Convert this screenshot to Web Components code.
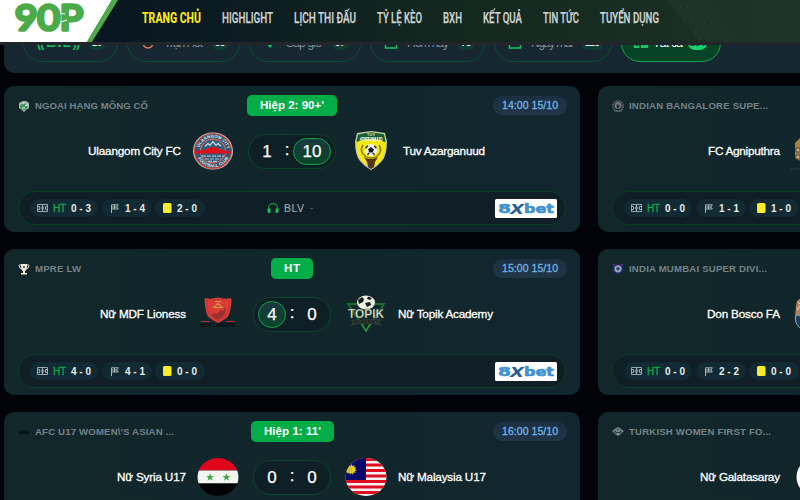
<!DOCTYPE html>
<html lang="vi">
<head>
<meta charset="utf-8">
<title>90P</title>
<style>
html,body{margin:0;height:500px;overflow:hidden;background:#020308;font-family:"Liberation Sans",Arial,sans-serif}
</style>
</head>
<body>
<live-page></live-page>
<script>
const matches = [
  { icon: 'mongol', league: 'NGOẠI HẠNG MÔNG CỔ', lw: 113, status: "Hiệp 2: 90+'", sw: 64, time: '14:00 15/10', home: 'Ulaangom City FC', hw: 93, hc: 'ulaan', score: '1,10,a', ac: 'tuv', away: 'Tuv Azarganuud', aw: 82, stats: ['0 - 3', '1 - 4', '2 - 0'], blv: 1 },
  { icon: 'india', league: 'INDIAN BANGALORE SUPE...', lw: 139, status: "Hiệp 2: 80'", sw: 58, time: '15:00 15/10', home: 'FC Agniputhra', hw: 72, hc: 'agni', score: '0,0', ac: 'gala', away: 'Kodagu FC', aw: 58, stats: ['0 - 0', '1 - 1', '1 - 0'] },
  { icon: 'trophy', league: 'MPRE LW', lw: 46, status: 'HT', sw: 16, time: '15:00 15/10', home: 'Nữ MDF Lioness', hw: 86, hc: 'mdf', score: '4,0,h', ac: 'topik', away: 'Nữ Topik Academy', aw: 95, stats: ['4 - 0', '4 - 1', '0 - 0'] },
  { icon: 'mumbai', league: 'INDIA MUMBAI SUPER DIVI...', lw: 138, status: 'HT', sw: 16, time: '15:30 15/10', home: 'Don Bosco FA', hw: 73, hc: 'bosco', score: '0,0', ac: 'gala', away: 'Mumbai FC', aw: 60, stats: ['0 - 0', '2 - 2', '0 - 0'] },
  { icon: 'afc', league: "AFC U17 WOMEN\\'S ASIAN ...", lw: 139, status: "Hiệp 1: 11'", sw: 57, time: '16:00 15/10', home: 'Nữ Syria U17', hw: 69, hc: 'syria', score: '0,0', ac: 'malaysia', away: 'Nữ Malaysia U17', aw: 88, stats: ['0 - 0', '0 - 0', '0 - 0'] },
  { icon: 'turk', league: 'TURKISH WOMEN FIRST FO...', lw: 142, status: "Hiệp 1: 11'", sw: 57, time: '16:00 15/10', home: 'Nữ Galatasaray', hw: 80, hc: 'gala', score: '0,0', ac: 'gala', away: 'Nữ Trabzonspor', aw: 82, stats: ['0 - 0', '0 - 0', '0 - 0'] }
];

// One line of text set to an exact advance width.
const line = (t, w, size, o = {}) => {
  const h = o.h || Math.round(size * 1.5), fill = o.fill || '#fff';
  return `<svg class="line" width="${w}" height="${h}" style="display:block;flex:none;overflow:visible"><text x="0" y="${o.y || Math.round(h / 2 + size * .36)}" textLength="${w}" lengthAdjust="${o.squeeze ? 'spacingAndGlyphs' : 'spacing'}" font-size="${size}" font-weight="${o.weight || 400}" fill="${fill}" ${o.ink ? `stroke="${fill}" stroke-width="${o.ink}"` : ''} ${o.font ? `font-family="${o.font}"` : ''}>${t}</text></svg>`;
};
const define = (name, css, render) => customElements.define(name, class extends HTMLElement {
  connectedCallback() {
    if (this.shadowRoot) return;
    this.attachShadow({ mode: 'open' }).innerHTML = `<style>*{box-sizing:border-box}${css}</style>${render(this)}`;
  }
});

const ball = (x, y, r) => `<circle cx="${x}" cy="${y}" r="${r}" fill="#f1f1ee"/><path d="M${x} ${y - r * .5}l${r * .48} ${r * .36}-${r * .18} ${r * .55}h-${r * .6}l-${r * .18}-${r * .55}z" fill="#171b1d"/><path d="M${x - r * .9} ${y - r * .3}l${r * .35}-${r * .4}M${x + r * .9} ${y - r * .3}l-${r * .35}-${r * .4}M${x - r * .6} ${y + r * .8}l${r * .3}-${r * .3}M${x + r * .6} ${y + r * .8}l-${r * .3}-${r * .3}" stroke="#171b1d" stroke-width="1.3"/>`;
const star = (x, y, r, c, n = 5, k = .4) => `<polygon fill="${c}" points="${Array.from({ length: n * 2 }, (_, i) => { const q = i % 2 ? r * k : r, a = Math.PI * i / n - Math.PI / 2; return (x + q * Math.cos(a)).toFixed(2) + ',' + (y + q * Math.sin(a)).toFixed(2); }).join(' ')}"/>`;

const crests = {
  ulaan: `<ellipse cx="20" cy="20" rx="20" ry="18.6" fill="#b7c2c9"/><g transform="translate(0 1.200) scale(1 .94)"><circle cx="20" cy="20" r="18.4" fill="#2d5875" stroke="#d8402f" stroke-width="1.2"/><circle cx="20" cy="20" r="12.6" fill="#315d7b" stroke="#d5695d" stroke-width="1.2"/>
   <defs><path id="a" d="M5.8 20a14.2 14.2 0 0 1 28.4 0"/><path id="b" d="M2.9 20a17.1 17.1 0 0 0 34.2 0"/></defs>
   <g font-size="4.3" font-weight="700" fill="#e6ebee"><text><textPath href="#a" startOffset="4" textLength="38">ULAANGOM CITY</textPath></text><text><textPath href="#b" startOffset="8" textLength="38">FOOTBALL CLUB</textPath></text></g>
   <path d="M12 15l3-3 2 2 3-4 3 4 2-2 3 3" fill="none" stroke="#c8d6df" stroke-width="1.3"/><path d="M9 25.5h22M12 28.5h16M15 31h10" stroke="#adbfcb" stroke-width="1.2" stroke-dasharray="4 1"/>
   <path d="M2 20.5l9-1.5 4-2 5-1.5 5 1.5 4 2 9 1.5v2.2H2z" fill="#e20d1b"/></g>`,
  tuv: `<path d="M20 0q8 1 14 2 1 5 2 8 0 14-5 20-4 5-11 9-7-4-11-9Q4 24 4 10q1-3 2-8 6-1 14-2z" fill="#c5cbb5"/><path d="M20 1.2q7 1 13 2 1 5 1.7 8 0 12-4.7 18.3-4 5-10 8-6-3-10-8Q5.300 23 5.300 11q.7-3 1.700-7.500 6-1.300 13-2.300z" fill="#f5e80f"/><path d="M20 1.200q7 1 13 2l1.700 8Q20 5 5.300 11L7 3.500q6-1.300 13-2.300z" fill="#146036"/><text x="16" y="4.800" font-size="3.800" font-weight="700" fill="#dbe4cf" textLength="8">TUV</text><text x="8.500" y="9.500" font-size="4.600" font-weight="700" fill="#eef2e5" textLength="23">AZARGANUUD</text><path d="M12 14q-4 6 2 11 6 4 12 0 6-5 2-11" fill="none" stroke="#8b7912" stroke-width="1.500"/><path d="M13 26q6 4 14 0l-3 5-1 5-3 2-3-2-1-5z" fill="#52371b"/>${ball(20, 19, 6)}`,
  mdf: `<path d="M7 4q6 1.500 13-.5 7 2 13 .5l.5 3q-1 12-4 16-3 3-9.500 6-6.500-3-9.500-6-3-4-4-16z" fill="#dc3d36"/><path d="M9 6q6 1 11-.5 5 1.500 11 .5l.5 3q-1 9-3.500 13-3 3-8 5-5-2-8-5-2.500-4-3.500-13z" fill="none" stroke="#b73330" stroke-width=".8"/><path d="M16 13.500l4-4 4 4zM17 7.500h6" fill="none" stroke="#d2944f" stroke-width="1.200"/><path d="M13 21l3-2 3 1 3-3 4-1 1-3 1 3-2 6-6 4-5-3z" fill="#98302f"/><path d="M3 27.500h9M28 27.500h9" stroke="#b92b2c" stroke-width="1"/><text x="2.500" y="33" font-size="5" font-weight="700" fill="#050b0d" textLength="35" lengthAdjust="spacingAndGlyphs">MDF LIONESS</text>`,
  topik: `<path d="M2 10h36L20 37z" fill="none" stroke="#176d31" stroke-width="1.800"/><path d="M15 28l5 9 5-9" fill="none" stroke="#2b9a3d" stroke-width="1.200"/><path d="M4 26l32-1-3 3 3 4-8-2H12l-8 2 3-4z" fill="#303a35"/><text x="8" y="29" font-size="4" font-weight="700" fill="#101a19" textLength="24">ACADEMY</text><ellipse cx="20" cy="8.500" rx="9" ry="7" fill="#edf0df"/><path d="M12 6l4-3 2 2-1 3-4 2zM22 2.500l4 1.500-2 2-3-1zM19 9l5-1 1 3-4 2z" fill="#151a1b"/><text x="2" y="24" font-size="12.500" font-weight="700" fill="#e4ead4" stroke="#2c4b38" stroke-width=".4" textLength="36" lengthAdjust="spacingAndGlyphs">TOPIK</text>`,
  syria: `<clipPath id="c"><ellipse cx="20" cy="20" rx="20.500" ry="19"/></clipPath><g clip-path="url(#c)"><path fill="#df071b" d="M-1 0h42v13.500H-1z"/><path fill="#f2f4ef" d="M-1 13.500h42v13H-1z"/><path fill="#020205" d="M-1 26.500h42V40H-1z"/>${star(12, 20.300, 4.200, '#47a348')}${star(28.500, 20.300, 4.200, '#47a348')}</g>`,
  malaysia: `<clipPath id="c"><ellipse cx="20" cy="20" rx="20.500" ry="19"/></clipPath><g clip-path="url(#c)"><path fill="#f4f2f0" d="M-1 0h42v40H-1z"/>${Array.from({ length: 7 }, (_, i) => `<path fill="#df0d20" d="M-1 ${1 + i * 5.500}h42v2.900H-1z"/>`).join('')}<path fill="#09096b" d="M-1 0h21v23H-1z"/>${star(5.500, 12.500, 5.500, '#ead31f', 11, .62)}<circle cx="3" cy="13" r="3.200" fill="#d6bf31"/></g>`,
  agni: `<path d="M3 27V12l5-5 6 4 9-3v22q-8 5-20-3z" fill="#a98243"/><path d="M4 17h4v4H4zM4 24h4v4H4z" fill="#d4ad67" stroke="#4d4237"/><path d="M-2 38h44" stroke="#263c4b"/>`,
  bosco: `<path d="M4 12q0-6 4-7h20v25q-8 5-15 4Q1 31 3 22z" fill="#b77d57"/><path d="M4 21q6 0 9 7l-5 6Q2 29 4 21z" fill="#183e5c" stroke="#7ea0b2"/><path d="M6 8l3 3-4 5" stroke="#eee0cc" fill="none"/>`,
  gala: `<circle cx="23.500" cy="20" r="19" fill="#fff"/><circle cx="25" cy="20" r="12" fill="#b22d35"/>`
};
const leagues = {
  mongol: `<path d="M1 3l4-2h3l3 2v5l-3 2-2 2-2-2-3-2z" fill="#a5b5a9"/><path d="M2 6l3-3 3 2 2 2-3 3-4-1z" fill="#35915a"/><path d="M4 3l2 1M7 6l3-1M4 8h3" stroke="#eee"/>`,
  trophy: `<path d="M3 1h6v3q0 3-2 4v2h2v1.500H3V10h2V8Q3 7 3 4z" fill="#ece8d8"/><path d="M3 2H1q0 4 3 4M9 2h2q0 4-3 4" fill="none" stroke="#d9d6c8"/><path d="M5.300 3h1.300v2H5.300z" fill="#182b2d"/>`,
  afc: `<path d="M0 5l3 1 3-2 3 2 3-1-2 3H2z" fill="#061219"/>`,
  india: `<circle cx="6" cy="6" r="5.200" fill="none" stroke="#766b61" stroke-width="1.200" stroke-dasharray="2 .7"/><circle cx="6" cy="5.500" r="3.500" fill="#6e7c87"/><path d="M4 6l2-2 2 2-2 3z" fill="#202e3b"/><path d="M2 11h8" stroke="#526b81"/>`,
  mumbai: `<path d="M.5 1h11v6q-1 3-5.500 4.500Q1.500 10 .5 7z" fill="#19276f"/><circle cx="6" cy="5.800" r="3.600" fill="#9aa3b3"/><circle cx="6" cy="5.800" r="1.700" fill="#343e69"/><path d="M1 2h2M9 2h2" stroke="#a33"/>`,
  turk: `<path d="M0 5l4-3 2-1 2 1 4 3-3 3-3 2-3-2z" fill="#697d83"/><path d="M2 6l4-3 4 3-4 2z" fill="#273c4a"/><path d="M4 5h4M5 8h2" stroke="#c4c4b5"/>`
};

define('team-crest', `:host{display:block;width:40px;height:40px;flex:none}svg{display:block;overflow:visible;font-family:"Liberation Sans",Arial,sans-serif}`,
  e => `<svg width="40" height="40" viewBox="0 0 40 40">${crests[e.getAttribute('kind')]}</svg>`);

define('site-header', `:host{display:flex;position:relative;z-index:2;height:45px;border-bottom:3px solid #22262a;box-sizing:border-box;background:linear-gradient(90deg,#071620 12%,#0b1b22 28%,#12261f 52%,#1a2d22 80%,#1d3028)}
 .logo{width:118px;height:42px;flex:none}nav{display:flex;gap:21px;padding:8px 0 0 24px}
 .decor{position:absolute;right:0;top:0}`,
  () => `<svg class="decor" width="133" height="42"><path d="M0 0h133v42H32z" fill="#213529" opacity=".65"/><g fill="#694a33">${Array.from({ length: 60 }, (_, i) => { const r = Math.floor(i / 6), x = 8 + r * 2.500 + (i % 6) * 7 + (r % 2) * 3; return `<circle cx="${x}" cy="${3 + r * 4}" r=".55" opacity="${.75 - (i % 6) * .1}"/>`; }).join('')}</g></svg>
 <svg class="logo" width="118" height="42"><path d="M0 0h112L87 42H0z" fill="#fff"/><path d="M112 0h6L92 42h-5z" fill="#4cad48"/><text x="15" y="29.500" font-family="Lato,sans-serif" font-weight="400" font-size="35" textLength="68" lengthAdjust="spacingAndGlyphs" fill="#4cab48" stroke="#4cab48" stroke-width="3.600" stroke-linejoin="round">90P</text><path d="M60 13l5 1M61 22l6-2" stroke="#fff" stroke-width="1"/></svg>
 <nav>${[['TRANG CHỦ', 59], ['HIGHLIGHT', 51], ['LỊCH THI ĐẤU', 62], ['TỶ LỆ KÈO', 45], ['BXH', 19], ['KẾT QUẢ', 39], ['TIN TỨC', 36], ['TUYỂN DỤNG', 59]].map(([t, w], i) => line(t, w, 14, { h: 22, y: 15, squeeze: 1, weight: i ? 500 : 800, ink: i ? .25 : 0, fill: i ? '#cfd5d3' : '#fbe91b', font: 'Roboto,sans-serif' })).join('')}</nav>`);

define('filter-pill', `:host{display:flex;align-items:center;gap:8px;box-sizing:border-box;height:38px;border:1px solid #0d4d31;border-radius:19px;padding:0 13px;flex:none}
 :host([active]){background:#074426;border-color:#16a34f;padding-left:11px;gap:5px}svg{flex:none}b{margin-left:auto;background:#103b30;color:#fff;font-size:9px;line-height:14px;height:14px;border-radius:8px;padding:0 4px}:host([active]) b{background:#19d070;color:#0a582f;padding:0 2px}`,
  e => {
    const k = e.getAttribute('icon'), c = '#12c766';
    const icon = { none: '', clock: '<circle cx="7" cy="7" r="5" fill="none" stroke="#e5775d" stroke-width="1.500"/>', pin: `<path d="M2 6l5 6 5-6-5-4z" fill="${c}"/><circle cx="7" cy="6" r="2" fill="#182832"/>`, cal: `<path d="M1.500 3h11v9h-11zM4 1v3M10 1v3M2 5h10" fill="none" stroke="${c}" stroke-width="1.500"/>`, grid: `<path d="M1 1h5v11H1zM8 7h7v5H8z" fill="${c}"/><path d="M3 5h2v5H3z" fill="#074426"/>` }[k];
    return `${icon ? `<svg width="15" height="14">${icon}</svg>` : ''}${line(e.getAttribute('label'), +e.getAttribute('w'), 12, { fill: e.getAttribute('tone') || '#85939a', weight: k === 'none' ? 700 : 400 })}<b>${e.getAttribute('count')}</b>`;
  });

define('filter-bar', `:host{display:flex;gap:9px;box-sizing:border-box;margin:-30px 0 13px 4px;height:58px;background:#172732;border-radius:0 0 0 10px;padding:9px 0 0 19px;overflow:hidden}`,
  () => [['(( LIVE ))', 43, 10, 'none', 95, '#16c267'], ['Trận Hot', 39, 38, 'clock', 113], ['Sắp giờ', 37, 37, 'pin', 112], ['Hôm nay', 42, 78, 'cal', 115], ['Ngày mai', 42, 113, 'cal', 118], ['Tất cả', 30, 234, 'grid', 100, '#fff']]
    .map(([t, w, n, ic, pw, tone]) => `<filter-pill label="${t}" w="${w}" count="${n}" icon="${ic}" style="width:${pw}px" ${tone ? `tone="${tone}"` : ''} ${ic === 'grid' ? 'active' : ''}></filter-pill>`).join(''));

define('score-box', `:host{display:flex;align-items:center;box-sizing:border-box;height:35px;border:1px solid #0b4526;border-radius:18px;background:#0f1f26;padding:0 4px;color:#fff;font-size:17px;-webkit-text-stroke:.25px #fff;flex:none}
 span{min-width:28px;height:27px;line-height:25px;padding:0 8px;border:1px solid transparent;border-radius:14px;text-align:center}span.wide{padding:0 8.500px}i{font-style:normal;width:12px;text-align:center;line-height:20px;margin-top:-3px}.win{border-color:#13a24a;background:linear-gradient(#183a40,#0b442b)}`,
  e => { const [a, b, w] = e.getAttribute('value').split(','); return `<span class="${w === 'h' ? 'win' : ''}">${a}</span><i>:</i><span class="${w === 'a' ? 'win' : ''} ${b.length > 1 ? 'wide' : ''}">${b}</span>`; });

define('stat-chip', `:host{display:flex;align-items:center;box-sizing:border-box;height:18px;border-radius:9px;background:#112a34;padding:0 7px;flex:none}.icon{margin-right:5px;flex:none}.ht{margin-right:5px;display:block}`,
  e => {
    const k = e.getAttribute('kind'), v = line(e.getAttribute('value'), 20, 10, { h: 16, y: 12, weight: 700, fill: '#e8eceb' });
    if (k === 'pitch') return `<svg class="icon" width="11" height="8"><path d="M.5.5h10v7H.5zM5.500.5v7M.5 2.500h2v3h-2M10.500 2.500h-2v3h2" fill="none" stroke="#a7b4b6" stroke-width=".9"/><circle cx="5.500" cy="4" r="1.500" fill="none" stroke="#a7b4b6" stroke-width=".7"/></svg><span class="ht">${line('HT', 13, 10, { h: 16, y: 12, ink: .3, fill: '#12a84d' })}</span>${v}`;
    if (k === 'flag') return `<svg class="icon" width="10" height="9" style="margin-left:1px"><path d="M1.500 9V.8h6.800L6.800 3l1.500 2H1.500M4.500 1v4M2 3h5" fill="none" stroke="#b9c3c3" stroke-width=".9"/></svg>${v}`;
    return `<svg class="icon" width="10" height="10"><rect x="1" width="8.500" height="10" rx="1.500" fill="#f9ec28"/></svg>${v}`;
  });

define('match-card', `:host{display:block;height:146px;box-sizing:border-box;background:linear-gradient(90deg,#11272a,#11262b 60%,#122630);border-radius:10px;padding:9px 14px 0;overflow:hidden}
 .top{display:grid;grid-template-columns:1fr auto 1fr;align-items:center;height:21px}.league{display:flex;align-items:center;gap:5px;min-width:0;margin-left:-.5px}.league>svg:first-child{flex:none}
 .status{background:#05ad48;border-radius:5px;height:21px;padding:1px 13px 0}.time{justify-self:end;background:linear-gradient(#1b3040,#203648);border-radius:10px;height:19px;padding:0 9px;margin-right:-1px}
 .teams{display:flex;align-items:center;gap:15px;height:40px;margin-top:15px}.team{flex:1;display:flex;align-items:center;gap:12px}.home{justify-content:flex-end;gap:12.500px}
 .foot{display:grid;grid-template-columns:1fr auto 1fr;align-items:center;height:34px;margin-top:20px;border:1px solid #0a3c24;border-radius:17px;background:#101f26;padding:0 8px 0 11px}.stats{display:flex;gap:4px}.stats stat-chip:last-child{margin-left:-1px}
 .blv{display:flex;align-items:center;gap:5px;padding-right:6px}.blv svg:last-child{margin-left:1px}.sponsor{justify-self:end;display:block}`,
  e => {
    const m = matches[+e.getAttribute('index')];
    return `<div class="top"><div class="league"><svg width="12" height="12">${leagues[m.icon]}</svg>${line(m.league, m.lw, 9.600, { h: 16, y: 11, weight: 700, fill: '#758388' })}</div>
 <div class="status">${line(m.status, m.sw, 11.500, { h: 18, y: 13, weight: 700 })}</div><div class="time">${line(m.time, 56, 10.500, { h: 19, y: 13, ink: .3, fill: '#72b3e8' })}</div></div>
 <div class="teams"><div class="team home">${line(m.home, m.hw, 11.700, { h: 18, y: 13, ink: .3 })}<team-crest kind="${m.hc}"></team-crest></div><score-box value="${m.score}"></score-box><div class="team"><team-crest kind="${m.ac}"></team-crest>${line(m.away, m.aw, 11.700, { h: 18, y: 13, ink: .3 })}</div></div>
 <div class="foot"><div class="stats"><stat-chip style="width:68px" kind="pitch" value="${m.stats[0]}"></stat-chip><stat-chip style="width:50px" kind="flag" value="${m.stats[1]}"></stat-chip><stat-chip style="width:50px" kind="card" value="${m.stats[2]}"></stat-chip></div>
 <div class="blv">${m.blv ? `<svg width="12" height="11"><path d="M1.500 6V5a4.500 4.300 0 0 1 9 0v1" fill="none" stroke="#149b4b" stroke-width="1.200"/><path d="M.5 5.500h3V10H1.500L.5 9zM8.500 5.500h3V9l-1 1h-2z" fill="#16bd5a"/></svg>${line('BLV', 20, 10.500, { h: 16, y: 12, ink: .2, fill: '#9ba5a9' })}${line('-', 4, 10, { h: 16, y: 11, fill: '#59676b' })}` : ''}</div>
 <svg class="sponsor" width="62" height="19"><rect width="62" height="19" rx="1.500" fill="#fff"/><g font-family="DejaVu Sans,sans-serif" font-weight="700" fill="#3f91cf"><text x="3" y="14" font-size="12" textLength="13" lengthAdjust="spacingAndGlyphs" stroke="#3f91cf" stroke-width=".5">8</text><text x="15" y="15" font-size="14" textLength="14" lengthAdjust="spacingAndGlyphs" fill="#285e91" font-style="italic">X</text><text x="29" y="14" font-size="12" textLength="30" lengthAdjust="spacingAndGlyphs" stroke="#3f91cf" stroke-width=".6">bet</text></g></svg></div>`;
  });

define('live-page', `:host{display:block;width:800px;height:500px;overflow:hidden;background:#020308}.grid{display:grid;grid-template-columns:576px 576px;gap:17px 18px;padding-left:4px}`,
  () => `<site-header></site-header><filter-bar></filter-bar><div class="grid">${matches.map((_, i) => `<match-card index="${i}"></match-card>`).join('')}</div>`);
</script>
</body>
</html>
